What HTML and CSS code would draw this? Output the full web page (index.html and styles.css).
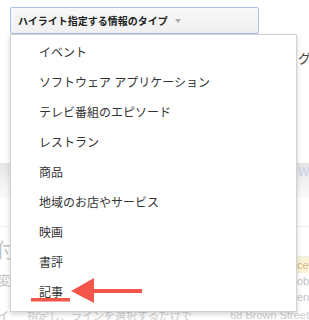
FILE: index.html
```html
<!DOCTYPE html>
<html lang="ja">
<head>
    <meta charset="UTF-8">
    <meta name="viewport" content="width=device-width, initial-scale=1.0">
    <title>Data Highlighter - タイプ選択</title>
    <link rel="stylesheet" href="styles.css">
</head>
<body>
    <div class="page">
        <div class="toolbar">
            <button class="type-btn">ハイライト指定する情報のタイプ<span class="caret"></span></button>
        </div>

        <!-- faded page content behind the open menu -->
        <div class="backdrop">
            <div class="bd-head"><span class="bd-right dark">グ</span></div>
            <div class="bd-band"><span class="bd-right faint-blue">Wa</span></div>
            <div class="bd-gap"></div>
            <div class="bd-body">
                <div class="bd-left">
                    <span class="big">付</span>
                    <span class="small">変</span>
                </div>
                <div class="bd-mid"></div>
                <div class="bd-side">
                    <span class="hl">ce</span>
                    <span>obe</span>
                    <span>ent</span>
                </div>
            </div>
            <div class="bd-foot">
                <span class="cut">イ</span>
                <span class="foot-text">指定し、ラインを選択するだけで</span>
                <span class="addr">68 Brown Street</span>
            </div>
        </div>

        <ul class="menu">
            <li>イベント</li>
            <li>ソフトウェア アプリケーション</li>
            <li>テレビ番組のエピソード</li>
            <li>レストラン</li>
            <li>商品</li>
            <li>地域のお店やサービス</li>
            <li>映画</li>
            <li>書評</li>
            <li>記事</li>
        </ul>

        <svg class="callout" width="309" height="320" viewBox="0 0 309 320">
            <rect x="31" y="298" width="39" height="3.5" fill="#f4574a"/>
            <rect x="92" y="289" width="50" height="4" fill="#f4574a"/>
            <polygon points="71,291 94,278 94,303" fill="#f4574a"/>
        </svg>
    </div>
</body>
</html>
```

FILE: styles.css
```css
body {
    margin: 0;
    background: #fff;
    font-family: "Liberation Sans", "Noto Sans CJK JP", sans-serif;
    color: #222;
}
.page {
    position: relative;
    width: 309px;
    height: 320px;
    overflow: hidden;
}
.toolbar {
    padding: 7px 0 0 10px;
}
.type-btn {
    display: flex;
    align-items: center;
    width: 249px;
    height: 27px;
    padding: 0 0 0 7px;
    border: 1px solid #a9c0ea;
    border-radius: 2px;
    background: linear-gradient(#f8f8f8, #f0f0f0);
    font-family: inherit;
    font-size: 10px;
    font-weight: bold;
    color: #222;
    text-align: left;
}
.caret {
    margin-left: 7px;
    border-top: 4px solid #aaa;
    border-left: 3px solid transparent;
    border-right: 3px solid transparent;
}

/* backdrop */
.backdrop {
    font-size: 13px;
    color: #c4c4c4;
}
.bd-head {
    height: 129px;
    padding-top: 14px;
    box-sizing: border-box;
}
.bd-right {
    display: block;
    padding-left: 298px;
    white-space: nowrap;
}
.dark {
    color: #444;
}
.bd-band {
    height: 35px;
    padding-top: 2px;
    box-sizing: border-box;
    background: linear-gradient(#e4e4e4, #f3f3f3 60%, #fafafa);
}
.faint-blue {
    color: #c9cde9;
    font-size: 12px;
}
.bd-gap {
    height: 28px;
    border-bottom: 1px solid #eee;
}
.bd-body {
    display: grid;
    grid-template-columns: 10px 287px 12px;
    height: 82px;
}
.bd-left {
    display: flex;
    flex-direction: column;
    overflow: hidden;
}
.bd-left .big {
    margin: 12px 0 0 -4px;
    font-size: 20px;
    line-height: 24px;
}
.bd-left .small {
    margin: 10px 0 0 -2px;
    line-height: 16px;
}
.bd-side {
    display: flex;
    flex-direction: column;
    padding-top: 28px;
    font-size: 11px;
    line-height: 16px;
    white-space: nowrap;
    border-top: 1px solid transparent;
}
.bd-side .hl {
    background: #fbf3d8;
    color: #cdb98a;
    border-top: 1px solid #eee;
}
.bd-foot {
    display: flex;
    align-items: center;
    height: 14px;
    margin-top: -1px;
    font-size: 11px;
    white-space: nowrap;
    color: #cfcfcf;
}
.bd-foot .cut {
    margin-left: -2px;
    width: 34px;
    color: #c0c0c0;
}
.bd-foot .addr {
    margin-left: 38px;
}

/* open dropdown */
.menu {
    position: absolute;
    top: 34px;
    left: 10px;
    width: 285px;
    margin: 0;
    padding: 3px 0;
    list-style: none;
    background: #fff;
    border: 1px solid #d2d2d2;
    box-shadow: 0 2px 5px rgba(0, 0, 0, 0.18);
}
.menu li {
    height: 30px;
    line-height: 30px;
    padding-left: 28px;
    font-size: 12px;
    color: #333;
}
.callout {
    position: absolute;
    top: 0;
    left: 0;
}
```
